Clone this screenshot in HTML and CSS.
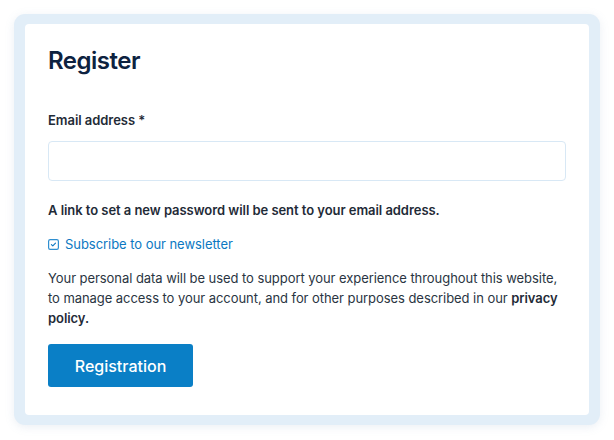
FILE: index.html
```html
<!DOCTYPE html>
<html>
<head>
<meta charset="utf-8">
<link rel="stylesheet" href="styles.css">
</head>
<body>
<div class="frame">
  <div class="card">
    <h1 class="title">Register</h1>
    <label class="label" for="email">Email address *</label>
    <input class="input" id="email" type="email">
    <p class="note">A link to set a new password will be sent to your email address.</p>
    <div class="check">
      <svg class="box" width="11" height="11" viewBox="0 0 11 11"><rect x="0.6" y="0.6" width="9.8" height="9.8" rx="1.6" fill="none" stroke="#2f8fd0" stroke-width="1.2"/><path d="M3.4 5.6 L4.8 6.9 L7.5 4.1" fill="none" stroke="#0b78c2" stroke-width="1.1" stroke-linecap="round" stroke-linejoin="round"/></svg>
      <span class="check-text">Subscribe to our newsletter</span>
    </div>
    <p class="privacy">Your personal data will be used to support your experience throughout this website, to manage access to your account, and for other purposes described in our <b>privacy policy.</b></p>
    <button class="btn">Registration</button>
  </div>
</div>
</body>
</html>
```
FILE: styles.css
```css
* { box-sizing: border-box; }
html, body { margin: 0; padding: 0; background: #ffffff; }
body {
  font-family: Inter, "Noto Sans", sans-serif;
  padding: 14px 14px 15px 14px;
}
.frame {
  width: 586px;
  height: 411px;
  background: #e2eef8;
  border-radius: 11px;
  padding: 10px 11px 10px 11px;
  box-shadow: 0 2px 10px rgba(120, 150, 180, 0.15);
}
.card {
  background: #ffffff;
  border-radius: 4px;
  height: 100%;
  padding: 23px 23px 0 23px;
  display: flex;
  flex-direction: column;
  align-items: flex-start;
}
.title {
  margin: 0;
  font-size: 24px;
  font-weight: 600;
  color: #0d2240;
  letter-spacing: -0.5px;
  line-height: 28px;
}
.label {
  margin-top: 36px;
  font-size: 13px;
  font-weight: 600;
  color: #1f2b37;
  line-height: 18px;
  letter-spacing: -0.05px;
}
.input {
  margin-top: 12px;
  width: 100%;
  height: 40px;
  border: 1px solid #d8e8f5;
  border-radius: 4px;
  background: #fff;
}
.note {
  margin: 20px 0 0 0;
  font-size: 13px;
  font-weight: 600;
  color: #1f2b37;
  line-height: 18px;
  letter-spacing: -0.05px;
}
.check {
  margin-top: 16px;
  display: flex;
  align-items: center;
  gap: 6px;
}
.box { display: block; }
.check-text {
  font-size: 13px;
  color: #0b78c2;
  line-height: 18px;
  letter-spacing: -0.05px;
}
.privacy {
  margin: 15px 0 0 0;
  font-size: 13px;
  color: #2a3542;
  line-height: 20px;
  letter-spacing: -0.06px;
}
.privacy b { font-weight: 600; color: #1f2b37; }
.btn {
  margin-top: 16px;
  width: 145px;
  height: 43px;
  background: #0a7fc6;
  border: none;
  border-radius: 3px;
  color: #ffffff;
  font-family: Inter, "Noto Sans", sans-serif;
  font-size: 16px;
  font-weight: 500;
}
```
